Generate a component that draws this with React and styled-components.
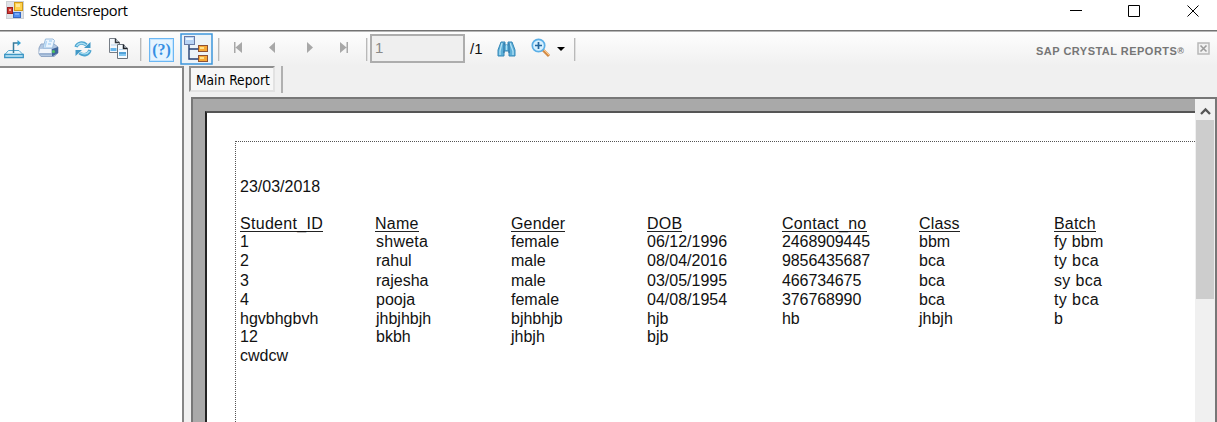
import React from 'react';
import styled, { createGlobalStyle } from 'styled-components';

const Global = createGlobalStyle`
  * { box-sizing: border-box; }
  body { margin: 0; overflow: hidden; background: #fff; }
`;

const Window = styled.div`
  width: 1217px;
  height: 422px;
  display: flex;
  flex-direction: column;
  overflow: hidden;
  background: #fff;
  color: #111;
`;

const TitleBar = styled.header`
  height: 30px;
  flex: none;
  display: flex;
  align-items: flex-start;
  padding-left: 6px;
`;

const AppIcon = styled.svg`
  margin-top: 1px;
`;

const Title = styled.span`
  flex: 1;
  margin-left: 6px;
  font: 14.6px/21px 'Open Sans', 'Noto Sans', sans-serif;
  letter-spacing: -0.42px;
  color: #000;
`;

const WindowControls = styled.svg`
  flex: none;
`;

const Toolbar = styled.div`
  height: 36px;
  flex: none;
  display: flex;
  align-items: flex-start;
  border-top: 1px solid #727272;
  box-shadow: inset 0 1px #b5b5b5;
  background: linear-gradient(#fdfdfd 2px, #f0f0f0);
`;

const Icon = styled.svg`
  flex: none;
  margin-left: ${(p) => p.$gap || 0}px;
  margin-top: ${(p) => p.$top || 0}px;
`;

const Separator = styled.i`
  flex: none;
  width: 2px;
  height: 23px;
  margin: 7px 0 0 ${(p) => p.$gap}px;
  background: linear-gradient(90deg, #b9b9b9 50%, #e0e0e0 50%);
`;

const PageInput = styled.div`
  flex: none;
  width: 95px;
  height: 29px;
  margin: 3px 0 0 2px;
  padding-left: 3px;
  border: 2px solid #adadad;
  background: #efefef;
  font: 15px/23px 'Liberation Sans', Arial, sans-serif;
  color: #898989;
`;

const PageTotal = styled.span`
  width: 14px;
  margin: 10px 0 0 5px;
  font: 15px/16px 'Liberation Sans', Arial, sans-serif;
`;

const Brand = styled.span`
  margin: 13px 0 0 auto;
  font: bold 11px/14px 'Liberation Sans', Arial, sans-serif;
  letter-spacing: 0.48px;
  white-space: nowrap;
  color: #767676;

  small {
    position: relative;
    top: -1px;
    font-size: 9px;
    letter-spacing: 0;
  }
`;

const Body = styled.main`
  flex: 1;
  min-height: 0;
  display: flex;
  background: #f0f0f0;
`;

const GroupTree = styled.aside`
  width: 184px;
  flex: none;
  border: solid #858585;
  border-width: 2px 2px 0 0;
  border-top-color: #8c8c8c;
  background: #fff;
`;

const Content = styled.section`
  flex: 1;
  min-width: 0;
  display: flex;
  flex-direction: column;
`;

const Tabs = styled.nav`
  height: 31px;
  flex: none;
  display: flex;
  padding-left: 5px;
`;

const Tab = styled.div`
  width: 86px;
  height: 26px;
  padding-left: 5px;
  border: 2px solid #8f8f8f;
  border-right-color: #e2e2e2;
  border-bottom-color: #e2e2e2;
  background: #f7f7f7;
  font: 13.6px/24px 'DejaVu Sans Condensed', 'DejaVu Sans', sans-serif;
  letter-spacing: 0.02px;
  white-space: nowrap;
  color: #000;
`;

const TabDivider = styled.i`
  width: 2px;
  height: 27px;
  margin-left: 6px;
  background: #b0b0b0;
`;

const Viewer = styled.div`
  flex: 1;
  min-height: 0;
  margin-left: 7px;
  display: flex;
  border: solid #777;
  border-width: 2px 2px 0 2px;
  background: #a9a9a9;
`;

const Paper = styled.article`
  flex: 1;
  margin: 12px 0 0 12px;
  padding: 28px 0 0 28px;
  border: solid #222;
  border-width: 2px 0 0 2px;
  border-top-color: #555;
  background: #fff;
`;

const ReportArea = styled.div`
  height: 100%;
  padding: 35px 0 0 4px;
  border: dotted #555;
  border-width: 1px 0 0 1px;
  font: 16px/19px 'Liberation Sans', Arial, sans-serif;
`;

const ReportDate = styled.div`
  margin-bottom: 18px;
`;

const Row = styled.div`
  height: ${(p) => p.$height}px;
  display: grid;
  grid-template-columns: 136px 135px 136px 135px 137px 135px 1fr;
  white-space: nowrap;
`;

const HeaderCell = styled.div`
  letter-spacing: ${(p) => p.$spacing || 0}px;

  span {
    display: inline-block;
    height: 18px;
    border-bottom: 1px solid #222;
  }

  &:nth-child(2) { margin-left: -1px; }
`;

const Cell = styled.div`
  letter-spacing: ${(p) => p.$spacing || 0}px;
`;

const ScrollBar = styled.div`
  width: 20px;
  flex: none;
  display: flex;
  flex-direction: column;
  padding-left: 1px;
  background: #f0f0f0;
`;

const ScrollThumb = styled.div`
  width: 18px;
  height: 179px;
  background: #cdcdcd;
`;

const headers = [
  ['Student_ID', 0.3],
  ['Name', 0.25],
  ['Gender', 0.15],
  ['DOB', 0.2],
  ['Contact_no', 0.27],
  ['Class', 0.15],
  ['Batch', 0.2],
];

const rows = [
  ['1', 'shweta', 'female', '06/12/1996', '2468909445', 'bbm', 'fy bbm'],
  ['2', 'rahul', 'male', '08/04/2016', '9856435687', 'bca', 'ty bca'],
  ['3', 'rajesha', 'male', '03/05/1995', '466734675', 'bca', 'sy bca'],
  ['4', 'pooja', 'female', '04/08/1954', '376768990', 'bca', 'ty bca'],
  ['hgvbhgbvh', 'jhbjhbjh', 'bjhbhjb', 'hjb', 'hb', 'jhbjh', 'b'],
  ['12', 'bkbh', 'jhbjh', 'bjb', '', '', ''],
  ['cwdcw', '', '', '', '', '', ''],
];

const rowHeights = [19, 20, 19, 19, 18, 19, 19];

const spacings = { shweta: 0.25, 'fy bbm': 0.25, 'ty bca': 0.4, 'sy bca': 0.35 };

function FormIcon() {
  return (
    <AppIcon width="18" height="18" viewBox="0 0 18 18">
      <rect x=".5" y=".5" width="17" height="17" fill="#dfe3e8" stroke="#ccd0d5" />
      <rect x="8.5" y="1.5" width="8" height="8" fill="#ffd24d" stroke="#d19a18" />
      <rect x="10" y="3" width="4" height="3" fill="#ffe99a" />
      <rect x="1.5" y="6.5" width="5" height="6" fill="#cf3a32" stroke="#9c1e20" />
      <rect x="3" y="8" width="2" height="2" fill="#f5a79b" />
      <rect x="7.5" y="11.5" width="7" height="5" fill="#4f8df0" stroke="#3468c4" />
      <path d="M9 13h4" stroke="#a6c9ff" />
    </AppIcon>
  );
}

function ExportIcon() {
  return (
    <Icon $gap={4} $top={8} width="21" height="21" viewBox="0 0 21 21" fill="none">
      <path d="M4.500 11.500h10.500l4 4H.8z" fill="#e8f7fd" stroke="#55a8d0" />
      <path d="M.7 15.500h18.600v3H.7z" fill="#c6eafa" stroke="#3c96c4" strokeWidth="1.300" />
      <path d="M9.500 14V4H14" stroke="#397b9c" strokeWidth="1.500" />
      <path d="M13.500 1 17 4l-3.500 3z" fill="#329fcf" />
    </Icon>
  );
}

function PrintIcon() {
  return (
    <Icon $gap={13} $top={7} width="21" height="20" viewBox="0 0 21 20">
      <path d="M1 10 3 6h13l4 3v6l-4 3.500H3L1 16z" fill="#b3c8e2" stroke="#91a7c5" />
      <path d="M5 10 7.500 1h7.500l1.500 1.500-2 7.500z" fill="#eaf5ff" stroke="#9abcdd" />
      <path d="m8.500 3-1.500 6m4-6h3m-4 3h3" stroke="#b0d5f4" strokeWidth="1.400" />
      <path d="M2 11h11v4H1z" fill="#f2f6fb" />
      <path d="m14 11 6-2v6l-5 3h-1z" fill="#40669c" />
      <path d="M2 16h12" stroke="#849fc2" />
      <circle cx="15.500" cy="13.500" r="1.500" fill="#4fc65b" />
    </Icon>
  );
}

function RefreshIcon() {
  return (
    <Icon $gap={15} $top={9} width="18" height="18" viewBox="0 0 18 18" fill="none">
      <path d="M2 7C3.500 3 8.500 1.500 12.500 5" stroke="#4aa3cf" strokeWidth="3.400" />
      <path d="M16.500 2v6H10z" fill="#4299c7" />
      <path d="M16 10c-1.500 5-6.500 6-10.500 3" stroke="#4aa3cf" strokeWidth="3.400" />
      <path d="M1.500 16v-6H8z" fill="#4299c7" />
      <path d="M2.500 6C5 2.500 9 2.500 12 5M15.500 11c-2.500 3.500-6.500 3.500-9.500 1.500" stroke="#a8def3" strokeWidth="1.400" />
    </Icon>
  );
}

function CopyIcon() {
  return (
    <Icon $gap={16} $top={6} width="21" height="23" viewBox="0 0 21 23">
      <path d="M1.500 1.500h6l4 4v10h-10z" fill="#f4f8fc" stroke="#777e87" />
      <path d="M7.500 1.500v4h4" fill="#ccd5df" stroke="#30353b" strokeWidth="1.400" />
      <path d="M3 8h6" stroke="#b9d4eb" />
      <path d="M2.500 11h6v3h-6z" fill="#67b7ed" />
      <path d="M9.500 7.500h6l4 4v10h-10z" fill="#f6fbff" stroke="#6b737c" />
      <path d="M15.500 7.500v4h4" fill="#bec8d2" stroke="#1d2329" strokeWidth="1.500" />
      <path d="M11 12.500h4" stroke="#b9d4eb" />
      <path d="M11 15h7v4h-7z" fill="#83c8f2" />
      <path d="M11 16h7" stroke="#257ec1" />
    </Icon>
  );
}

const HelpBox = styled.div`
  flex: none;
  width: 25px;
  height: 24px;
  margin: 7px 0 0 7px;
  border: 1px solid #6bb7f4;
  background: #e6f4ff;
  box-shadow: inset 0 0 0 1px #c5e5ff;
  color: #358fe3;
  text-align: center;
  white-space: nowrap;
  font: bold 16px/21px 'Liberation Serif', 'Times New Roman', serif;
`;

function TreeIcon() {
  return (
    <Icon $gap={6} $top={2} width="33" height="32" viewBox="0 0 33 32">
      <rect x="1" y="1" width="31" height="30" fill="#edf3f8" stroke="#3c96db" strokeWidth="1.500" />
      <path d="M9 10v16h10M9 16h10" fill="none" stroke="#263f70" strokeWidth="1.400" />
      <rect x="4.500" y="3.500" width="10" height="8" fill="#b8d4f5" stroke="#687aa5" />
      <path d="M6 5h7v2H6z" fill="#edf7ff" />
      <g fill="#f6a735" stroke="#8d5135">
        <rect x="18.500" y="12.500" width="9" height="6" />
        <rect x="18.500" y="22.500" width="9" height="6" />
      </g>
      <path d="M20 14h4v2h-4zm0 10h4v2h-4z" fill="#ffe18a" />
    </Icon>
  );
}

function NavIcon({ gap, kind }) {
  const shapes = {
    first: 'M0 1h1.500v11H0zM8 1v11L1.500 6.500z',
    previous: 'M7 1v11L1 6.500z',
    next: 'M1 1v11l6-5.500z',
    last: 'M0 1v11l6.500-5.500zM6.500 1H8v11H6.500z',
  };
  return (
    <Icon $gap={gap} $top={10} width="8" height="13" viewBox="0 0 8 13">
      <path d={shapes[kind]} fill="#a8a8a8" />
    </Icon>
  );
}

function FindIcon() {
  return (
    <Icon $gap={13} $top={9} width="19" height="17" viewBox="0 0 19 17">
      <path d="M4 2h4v3h3V2h4l3 8v6h-6v-5H7v5H1v-6z" fill="#5cafd8" stroke="#3687b6" />
      <path d="M5 3 3 11v4M13 3l3 8v4M9.500 5v5" fill="none" stroke="#b1e1f5" strokeWidth="1.300" />
      <path d="M7 3v10M12 3v10" fill="none" stroke="#276c9e" />
    </Icon>
  );
}

function ZoomIcon() {
  return (
    <Icon $gap={15} $top={7} width="20" height="20" viewBox="0 0 20 20" fill="none">
      <path d="m12 12 6 6" stroke="#d28a45" strokeWidth="3" />
      <path d="m12 11 6 6" stroke="#ffc884" />
      <circle cx="7.500" cy="7.500" r="6.200" fill="#d6f0ff" stroke="#5aafe7" strokeWidth="1.700" />
      <path d="M4 7.500h7M7.500 4v7" stroke="#23669e" strokeWidth="1.700" />
    </Icon>
  );
}

export default function App() {
  return (
    <Window>
      <Global />
      <TitleBar>
        <FormIcon />
        <Title>Studentsreport</Title>
        <WindowControls width="150" height="22" fill="none" stroke="#000">
          <path d="M3 10.500h12M61.500 5.500h11v11h-11zM120.500 5.500l11 11m0-11-11 11" />
        </WindowControls>
      </TitleBar>
      <Toolbar>
        <ExportIcon />
        <PrintIcon />
        <RefreshIcon />
        <CopyIcon />
        <Separator $gap={11} />
        <HelpBox>(?)</HelpBox>
        <TreeIcon />
        <Separator $gap={5} />
        <NavIcon gap={14} kind="first" />
        <NavIcon gap={26} kind="previous" />
        <NavIcon gap={30} kind="next" />
        <NavIcon gap={26} kind="last" />
        <Separator $gap={18} />
        <PageInput>1</PageInput>
        <PageTotal>/1</PageTotal>
        <FindIcon />
        <ZoomIcon />
        <Icon $gap={6} $top={16} width="8" height="5">
          <path d="M0 0h8L4 4z" fill="#000" />
        </Icon>
        <Separator $gap={9} />
        <Brand>SAP CRYSTAL REPORTS<small>®</small></Brand>
        <Icon $gap={13} $top={11} width="20" height="13" fill="none">
          <path d="M1 1h11v11H1z" fill="#f1f1f1" stroke="#b8b8b8" strokeWidth="1.500" />
          <path d="m3.500 3.500 6 6m0-6-6 6" stroke="#9b9b9b" strokeWidth="1.600" />
        </Icon>
      </Toolbar>
      <Body>
        <GroupTree />
        <Content>
          <Tabs>
            <Tab>Main Report</Tab>
            <TabDivider />
          </Tabs>
          <Viewer>
            <Paper>
              <ReportArea>
                <ReportDate>23/03/2018</ReportDate>
                <Row $height={18}>
                  {headers.map(([label, spacing]) => (
                    <HeaderCell key={label} $spacing={spacing}><span>{label}</span></HeaderCell>
                  ))}
                </Row>
                {rows.map((row, r) => (
                  <Row key={row[0]} $height={rowHeights[r]}>
                    {row.map((value, i) => (
                      <Cell key={i} $spacing={spacings[value] || (i === 4 ? -0.1 : 0)}>{value}</Cell>
                    ))}
                  </Row>
                ))}
              </ReportArea>
            </Paper>
            <ScrollBar>
              <Icon $gap={4} $top={7} width="11" height="14" fill="none">
                <path d="m1 8 4.500-4.500L10 8" stroke="#555" strokeWidth="2.300" />
              </Icon>
              <ScrollThumb />
            </ScrollBar>
          </Viewer>
        </Content>
      </Body>
    </Window>
  );
}
